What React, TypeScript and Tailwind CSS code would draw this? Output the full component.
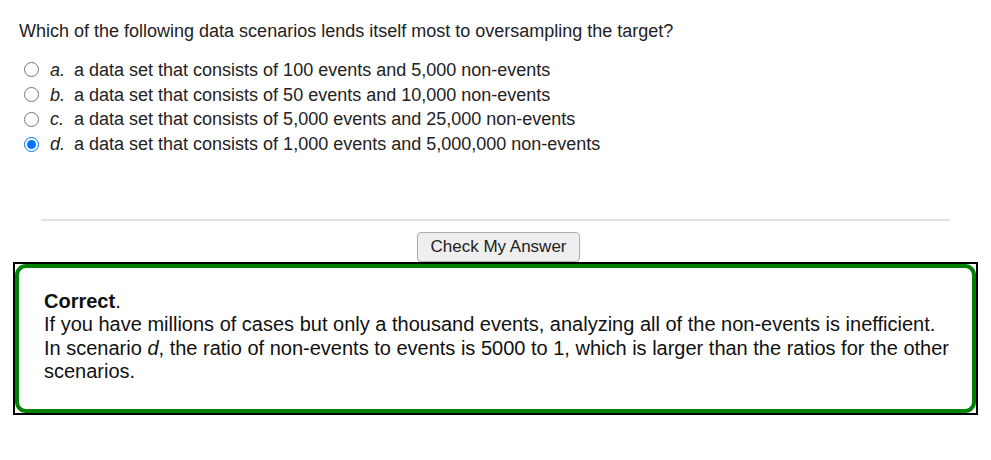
const options = [
  { key: "a", text: "a data set that consists of 100 events and 5,000 non-events" },
  { key: "b", text: "a data set that consists of 50 events and 10,000 non-events" },
  { key: "c", text: "a data set that consists of 5,000 events and 25,000 non-events" },
  { key: "d", text: "a data set that consists of 1,000 events and 5,000,000 non-events" },
];

export default function App() {
  return (
    <div className="min-h-[460px] bg-white font-['Liberation_Sans',Arial,sans-serif] text-[#222]">
      <div className="pl-[19px] pt-[21px] text-[18px] leading-[20px]">
        Which of the following data scenarios lends itself most to oversampling the target?
      </div>

      <div className="mt-[16.6px] flex flex-col pl-[24px] text-[18px] leading-[20px]">
        {options.map((option) => (
          <label key={option.key} className="flex h-[24.7px] items-center">
            <input
              type="radio"
              name="answer"
              defaultChecked={option.key === "d"}
              className="m-0 h-[15px] w-[15px]"
            />
            <span className="ml-[11px] w-[24px] italic">{option.key}.</span>
            <span>{option.text}</span>
          </label>
        ))}
      </div>

      <div className="mx-[41px] mt-[62.6px] h-[2px] bg-[#dde3ea]" />

      <div className="mt-[11px] flex justify-center pl-[6px]">
        <button className="h-[30px] rounded-[4px] border border-[#adadad] bg-[#efefef] px-[12px] text-[17px] leading-[20px] text-[#222]">
          Check My Answer
        </button>
      </div>

      <div className="ml-[13px] mr-[13px] border-2 border-black">
        <div className="rounded-[11px] border-[4px] border-[#008000] pb-[26px] pl-[25px] pr-[16px] pt-[22px] text-[20px] leading-[23.3px] text-[#111]">
          <div>
            <span className="font-bold">Correct</span>.
          </div>
          <div>
            If you have millions of cases but only a thousand events, analyzing all of the non-events is inefficient.
            In scenario <span className="italic">d</span>, the ratio of non-events to events is 5000 to 1, which is larger
            than the ratios for the other scenarios.
          </div>
        </div>
      </div>
    </div>
  );
}
